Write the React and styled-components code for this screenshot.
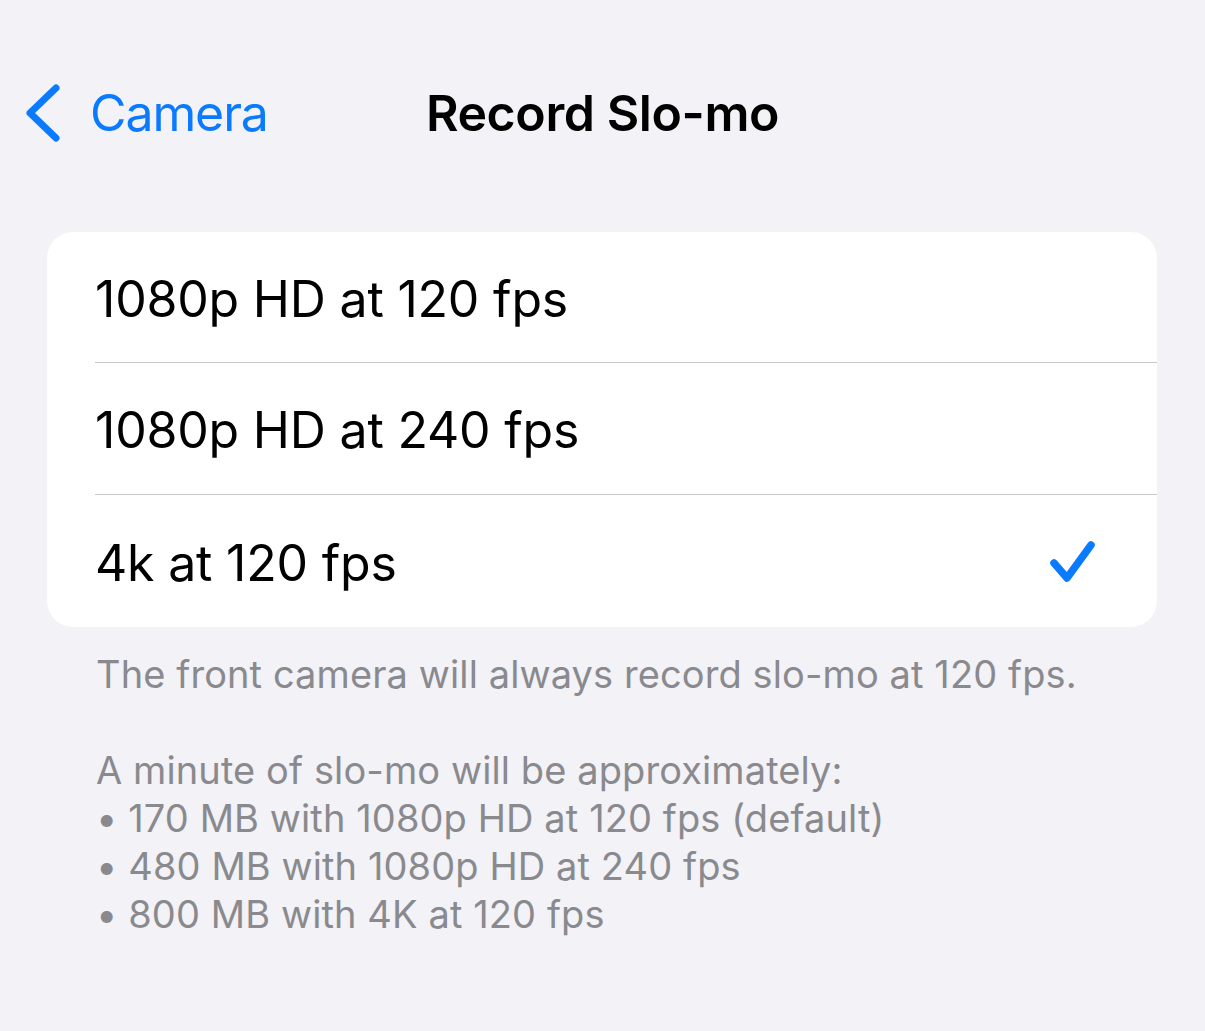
import React from "react";
import styled, { createGlobalStyle } from "styled-components";

const Global = createGlobalStyle`
  html, body {
    margin: 0;
    padding: 0;
    background: #f2f2f7;
  }
  body {
    font-family: Inter, "Noto Sans", "Liberation Sans", sans-serif;
    -webkit-font-smoothing: antialiased;
  }
`;

const Page = styled.div`
  width: 1205px;
  min-height: 1031px;
  background: #f2f2f7;
  padding-top: 78px;
  box-sizing: border-box;
`;

const NavBar = styled.div`
  display: grid;
  grid-template-columns: 1fr auto 1fr;
  align-items: center;
  height: 70px;
  padding: 0 24px;
`;

const BackButton = styled.div`
  display: flex;
  align-items: center;
  gap: 30px;
  color: #0a7aff;
  font-size: 50px;
  letter-spacing: -1.1px;
`;

const Title = styled.div`
  font-size: 50px;
  font-weight: 600;
  color: #000;
  letter-spacing: -0.4px;
`;

const Card = styled.div`
  margin: 84px 48px 0 47px;
  background: #fff;
  border-radius: 26px;
  overflow: hidden;
`;

const Row = styled.div`
  display: flex;
  align-items: center;
  justify-content: space-between;
  height: ${(p) => (p.first ? "130px" : p.last ? "133px" : "132px")};
  margin-left: 48px;
  padding: 3px 60px 0 0;
  box-sizing: border-box;
  border-top: ${(p) => (p.first ? "none" : "1px solid #c8c8cc")};
  font-size: 50px;
  color: #000;
  letter-spacing: -0.2px;
`;

const Footer = styled.div`
  padding: 23px 48px 0 96px;
  color: #8a8a8e;
  font-size: 38px;
  line-height: 48px;
  letter-spacing: 0.1px;
`;

const Para = styled.p`
  margin: 0 0 48px;
`;

const Chevron = () => (
  <svg width="36" height="58" viewBox="0 0 36 58">
    <path
      d="M32 4 L6 29 L32 54"
      fill="none"
      stroke="#0a7aff"
      strokeWidth="7"
      strokeLinecap="round"
      strokeLinejoin="round"
    />
  </svg>
);

const Check = () => (
  <svg width="48" height="46" viewBox="0 0 48 46">
    <path
      d="M5 23 L18 38 L42 5"
      fill="none"
      stroke="#0a7aff"
      strokeWidth="7.5"
      strokeLinecap="round"
      strokeLinejoin="round"
    />
  </svg>
);

const options = [
  { label: "1080p HD at 120 fps" },
  { label: "1080p HD at 240 fps" },
  { label: "4k at 120 fps", selected: true },
];

export default function App() {
  return (
    <Page>
      <Global />
      <NavBar>
        <BackButton>
          <Chevron />
          Camera
        </BackButton>
        <Title>Record Slo-mo</Title>
        <div />
      </NavBar>
      <Card>
        {options.map((o, i) => (
          <Row
            key={o.label}
            first={i === 0}
            last={i === options.length - 1}
          >
            {o.label}
            {o.selected && <Check />}
          </Row>
        ))}
      </Card>
      <Footer>
        <Para>The front camera will always record slo-mo at 120 fps.</Para>
        <Para>
          A minute of slo-mo will be approximately:
          <br />• 170 MB with 1080p HD at 120 fps (default)
          <br />• 480 MB with 1080p HD at 240 fps
          <br />• 800 MB with 4K at 120 fps
        </Para>
      </Footer>
    </Page>
  );
}
